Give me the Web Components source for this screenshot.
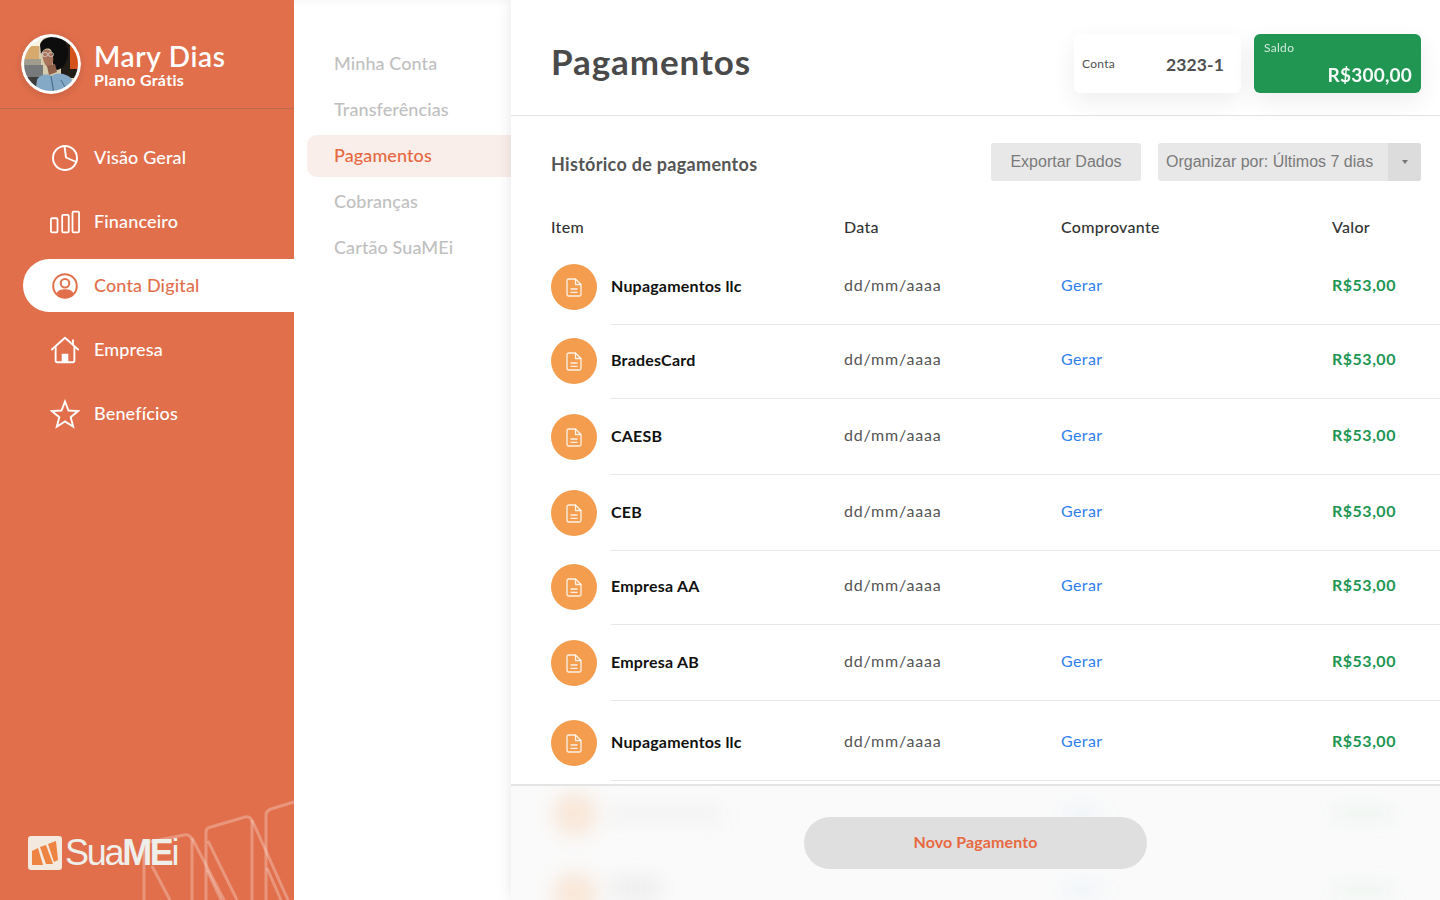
<!DOCTYPE html>
<html lang="pt-BR"><head><meta charset="utf-8"><title>Pagamentos</title>
<style>
html,body{margin:0;height:100%;overflow:hidden;background:#fff}
body{font-family:"Lato","Liberation Sans",sans-serif}
</style></head><body>
<sua-app></sua-app>
<script>
const FONT='"Lato","Liberation Sans",sans-serif';
function def(name,html,proto){
  customElements.define(name,class extends HTMLElement{
    constructor(){super();this.attachShadow({mode:'open'}).innerHTML=typeof html==='function'?html(this):html;}
    connectedCallback(){proto&&proto.call(this)}
  });
}
const ICONS={
 pie:`<svg width="30" height="30" viewBox="0 0 30 30" fill="none" stroke="currentColor" stroke-width="1.9" stroke-linejoin="round"><circle cx="15" cy="15" r="12"/><path d="M14.500 3.200 16 14.500 26.300 19"/></svg>`,
 bars:`<svg width="32" height="24" viewBox="0 0 32 24" fill="none" stroke="currentColor" stroke-width="1.9"><rect x="1" y="8" width="7" height="15" rx="1.2"/><rect x="13" y="4.500" width="7" height="18.500" rx="1.2"/><rect x="24" y="1" width="7" height="22" rx="1.2"/></svg>`,
 user:`<svg width="30" height="30" viewBox="0 0 30 30"><circle cx="15" cy="15" r="11.800" fill="none" stroke="currentColor" stroke-width="2"/><circle cx="15" cy="12.300" r="4.300" fill="none" stroke="currentColor" stroke-width="2"/><path d="M6.500 22.500C8 19.200 11 18.300 15 18.300S22 19.200 23.500 22.500C21.500 25 18.500 26.500 15 26.500S8.500 25 6.500 22.500Z" fill="currentColor"/></svg>`,
 house:`<svg width="32" height="30" viewBox="0 0 32 30" fill="none" stroke="currentColor" stroke-width="2" stroke-linejoin="round" stroke-linecap="round"><path d="M2 14.500 16 2l14 12.500"/><path d="M24.500 9.500V4.500"/><path d="M6 12v14.500a1.500 1.500 0 0 0 1.500 1.500h17a1.500 1.500 0 0 0 1.500-1.500V12"/><rect x="12.500" y="19" width="7" height="9" fill="currentColor" stroke="none"/></svg>`,
 star:`<svg width="30" height="30" viewBox="0 0 30 30" fill="none" stroke="currentColor" stroke-width="1.900" stroke-linejoin="miter"><path d="M15 2.500 18.500 11.500 28.200 12 20.700 18.200 23.200 27.700 15 22.400 6.800 27.700 9.300 18.200 1.800 12 11.500 11.500Z"/></svg>`
};
def('user-avatar',`<style>:host{display:block;width:60px;height:60px;flex:none;border-radius:50%;box-shadow:0 2px 8px rgba(0,0,0,.12)}svg{display:block;border-radius:50%}</style>
<svg width="60" height="60" viewBox="0 0 60 60"><defs><filter id="b" x="-10%" y="-10%" width="120%" height="120%"><feGaussianBlur stdDeviation=".7"/></filter><clipPath id="c"><circle cx="30" cy="30" r="27"/></clipPath></defs>
<circle cx="30" cy="30" r="30" fill="#fff"/>
<g clip-path="url(#c)"><g filter="url(#b)"><rect width="60" height="60" fill="#d6cbac"/><rect x="0" y="0" width="22" height="12" fill="#f7f2e2"/><rect x="3" y="12" width="15" height="13" fill="#d7a96c"/><rect x="2" y="25" width="18" height="6" fill="#a19d8e"/><rect x="0" y="31" width="22" height="12" fill="#77797a"/><rect x="0" y="43" width="20" height="17" fill="#3b3c3e"/><rect x="40" y="2" width="20" height="42" fill="#241c18"/><rect x="49" y="11" width="8" height="24" fill="#d4531f"/>
<path d="M19 11C20 5 28 2 36 3 45 5 48 13 47 22 46 30 41 35 36 36 30 34 33 22 30 16 27 13 22 15 20 20Z" fill="#110e0d"/>
<path d="M22 17C26 14 31 16 32 22 33 28 31 33 27 33 24 32 22 26 21.500 22Z" fill="#a8735a"/>
<rect x="21.500" y="18.500" width="5" height="4" rx="2" fill="none" stroke="#d5d8d6" stroke-width=".8"/><rect x="27.500" y="18.500" width="5" height="4" rx="2" fill="none" stroke="#d5d8d6" stroke-width=".8"/>
<path d="M26 32 34 30 36 38 28 41Z" fill="#8e5f48"/>
<path d="M14 60 16 46C18 41 26 39 30 42 36 38 44 39 50 44L57 60Z" fill="#83a9c6"/><path d="M30 42 33 60" stroke="#4a6b89" stroke-width="1.200" fill="none"/><path d="M40 46 48 60" stroke="#4a6b89" stroke-width="1" fill="none"/>
</g></g></svg>`);
def('nav-item',h=>`<style>:host{display:flex;align-items:center;height:53px;margin-left:23px;border-radius:27px 0 0 27px;color:#fff;font:500 18px/1 ${FONT};letter-spacing:.15px}
:host([active]){background:#fff;color:#E16F4C}
.ic{width:30px;display:flex;justify-content:center;margin-left:27px;margin-right:14px;flex:none}svg{display:block}.t{padding-bottom:2px}</style>
<span class="ic">${ICONS[h.getAttribute('icon')]}</span><span class="t"><slot></slot></span>`);
def('brand-logo',`<style>:host{display:flex;align-items:center;gap:3px;color:#eeeeea}
.t{font:400 36px/1 "Liberation Sans",sans-serif;letter-spacing:-2.300px}b{font-weight:700}svg{display:block}</style>
<svg width="34" height="34" viewBox="0 0 34 34"><rect width="34" height="34" rx="3" fill="#f3e9df"/><path d="M4 15 10 12 15 29H4Z M12 11 18 9 25 28H18Z M20 8 28 5 30 24 26 26Z" fill="#EE8442"/></svg>
<span class="t">Sua<b>ME</b>i</span>`);
def('app-sidebar',`<style>:host{display:flex;flex-direction:column;width:294px;height:900px;flex:none;background:#E16F4C;position:relative;overflow:hidden;color:#fff;font-family:${FONT}}
.prof{height:109px;box-sizing:border-box;padding:34px 0 0 21px;display:flex;gap:13px;border-bottom:1.500px solid #b9694f}
.nm{font:600 28px/1 ${FONT};letter-spacing:.7px;margin-top:8px}.pl{font:700 16px/1 ${FONT};letter-spacing:.3px;margin-top:2px}
nav{display:flex;flex-direction:column;gap:11px;padding-top:22px;flex:1}
.deco{position:absolute;right:0;bottom:0}
brand-logo{position:absolute;left:28px;bottom:29px}</style>
<div class="prof"><user-avatar></user-avatar><div><div class="nm">Mary Dias</div><div class="pl">Plano Grátis</div></div></div>
<nav><slot></slot></nav>
<svg class="deco" width="160" height="100" viewBox="134 800 160 100" fill="none" stroke="#fff" stroke-opacity=".27" stroke-width="3"><path d="M144 900V848Q144 843 149 842L184 835Q190 834 192 840V900"/><path d="M152 866 170 900"/><path d="M192 838 224 900"/><path d="M206 900V832Q206 828 211 827L245 817Q251 816 252 822V900"/><path d="M208 841 237 900"/><path d="M207 870 221 900"/><path d="M252 820 288 900"/><path d="M266 900V815Q266 811 271 809L294 802"/><path d="M267 868 281 900"/></svg>
<brand-logo></brand-logo>`);
def('sub-item',`<style>:host{display:flex;align-items:center;height:42px;box-sizing:border-box;padding-bottom:2px;margin-left:13px;padding-left:27px;border-radius:10px 0 0 10px;color:#c0c0c0;font:500 18px/1 ${FONT};letter-spacing:.1px}
:host([active]){background:#F9EEEA;color:#E6683F}</style><slot></slot>`);
def('sub-nav',`<style>:host{display:flex;flex-direction:column;gap:4px;width:217px;flex:none;box-sizing:border-box;padding-top:43px;background:#fff;box-shadow:inset 0 8px 8px -8px rgba(0,0,0,.06)}</style><slot></slot>`);
def('info-card',`<style>:host{display:block;width:167px;height:59px;box-sizing:border-box;border-radius:6px;background:#fff;box-shadow:0 8px 24px rgba(0,0,0,.07);position:relative;color:#4f4f4f;font-family:${FONT}}
:host([tone=green]){background:#219653;color:#fff}
#w{height:100%;box-sizing:border-box}
.row{display:flex;align-items:center;justify-content:space-between;padding:0 17px 0 8px}
.row .v{padding-top:3px}.l{font:400 12px/1 ${FONT};letter-spacing:.3px}.v{font:700 17.500px/1 ${FONT};letter-spacing:.1px}
.col{padding:8px 9px 0 10px;display:flex;flex-direction:column}.col .l{opacity:.8}.col .v{align-self:flex-end;margin-top:11px;opacity:.95;font-size:19px;letter-spacing:.2px}</style>
<div id="w"></div>`,function(){
 const g=this.getAttribute('tone')==='green';const w=this.shadowRoot.getElementById('w');
 w.className=g?'col':'row';w.innerHTML=`<span class="l">${this.getAttribute('label')}</span><span class="v">${this.getAttribute('value')}</span>`;
});
def('page-header',`<style>:host{display:flex;align-items:flex-start;height:116px;box-sizing:border-box;border-bottom:1px solid #e2e2e2;padding:34px 19px 0 40px;gap:13px;flex:none}
h1{margin:0 auto 0 0;font:700 35px/55px ${FONT};color:#4a4a4a;letter-spacing:.9px}</style>
<h1><slot name="title"></slot></h1><slot></slot>`);
def('tool-bar',`<style>:host{display:flex;align-items:center;height:38px;margin:27px 19px 0 40px;gap:17px;flex:none}
h2{margin:0 auto 0 0;font:700 18px/1 ${FONT};color:#555;letter-spacing:.3px;padding-top:3px}
.b{height:38px;display:flex;align-items:center;box-sizing:border-box;background:#e8e8e8;border-radius:3px;color:#7a7a7a;font:400 16px/1 "Liberation Sans",sans-serif}
.b span:first-child,.e{padding-bottom:1px}
.e{width:150px;justify-content:center}.s{width:263px;padding-left:8px;justify-content:space-between;overflow:hidden;padding-bottom:0}
.a{width:33px;height:100%;background:#dcdcdc;display:flex;align-items:center;justify-content:center}
.a i{border:3.500px solid transparent;border-top:4px solid #777;border-bottom:0;display:block}</style>
<h2>Histórico de pagamentos</h2><div class="b e">Exportar Dados</div><div class="b s"><span>Organizar por: Últimos 7 dias</span><span class="a"><i></i></span></div>`);
const COLS='grid-template-columns:293px 217px 271px 1fr;';
def('table-head',`<style>:host{display:grid;${COLS}height:32px;margin:38px 0 0 40px;align-items:start;font:500 16px/1 ${FONT};color:#333;letter-spacing:.3px;flex:none}</style><span>Item</span><span>Data</span><span>Comprovante</span><span>Valor</span>`);
def('pay-row',h=>`<style>:host{display:grid;${COLS}align-items:center;flex:none;margin-left:40px;height:var(--h,76px);box-sizing:border-box;padding-top:var(--p,0);padding-bottom:var(--q,0);position:relative;font:400 16px/1 ${FONT};letter-spacing:.8px}
:host::after{content:"";position:absolute;left:60px;right:0;bottom:0;height:1px;background:#e6e6e6}
.n{display:flex;align-items:center;gap:14px;font-weight:700;color:#111;letter-spacing:.2px}.n>span:last-child{margin-top:-2px}
.c{width:46px;height:46px;border-radius:50%;background:#F49D4E;display:flex;align-items:center;justify-content:center;flex:none}
.d{color:#555;margin-top:-4px}.g{color:#2F80ED;margin-top:-4px;letter-spacing:.4px}.v{color:#219653;font-weight:700;margin-top:-4px;letter-spacing:.5px}svg{display:block}</style>
<div class="n"><span class="c"><svg width="16" height="19" viewBox="0 0 16 19" fill="none" stroke="#fff" stroke-opacity=".85" stroke-width="1.300" stroke-linejoin="round"><path d="M2.500 1h7L15 6.500V16.500a1.500 1.500 0 0 1-1.500 1.500h-11A1.500 1.500 0 0 1 1 16.500V2.500A1.500 1.500 0 0 1 2.500 1Z"/><path d="M9.500 1v5.500H15"/><path d="M4.500 11h7M4.500 14.300h7"/></svg></span><span><slot></slot></span></div>
<span class="d">dd/mm/aaaa</span><span class="g">Gerar</span><span class="v">R$53,00</span>`);
def('action-bar',`<style>:host{position:absolute;left:0;right:0;bottom:0;height:116px;box-sizing:border-box;border-top:2px solid #e4e4e4;background:#fafafa;overflow:hidden;display:flex;justify-content:center;padding-top:31px}
.blur{position:absolute;inset:0;filter:blur(10px)}
.blur i{position:absolute;display:block}
.o{left:42px;width:44px;height:44px;border-radius:50%;background:#f49d4e;opacity:.2}
.g{left:100px;height:20px;background:#888;opacity:.06}
.bl{left:550px;width:42px;height:16px;background:#2F80ED;opacity:.05}
.gr{left:820px;width:64px;height:16px;background:#219653;opacity:.05}
button{all:unset;position:relative;width:343px;height:52px;box-sizing:border-box;padding-bottom:2px;border-radius:26px;background:#dfdfdf;color:#E8693F;font:700 16px/50px ${FONT};text-align:center;letter-spacing:.1px}</style>
<div class="blur"><i class="o" style="top:6px"></i><i class="g" style="top:18px;width:110px"></i><i class="bl" style="top:20px"></i><i class="gr" style="top:20px"></i><i class="o" style="top:86px"></i><i class="g" style="top:92px;width:50px;opacity:.12"></i><i class="bl" style="top:96px"></i><i class="gr" style="top:96px"></i></div>
<button>Novo Pagamento</button>`);
def('main-panel',`<style>:host{display:flex;flex-direction:column;flex:1;min-width:0;height:900px;overflow:hidden;position:relative;background:#fff;box-shadow:0 0 14px rgba(0,0,0,.1);z-index:1}</style><slot></slot>`);
def('sua-app',`<style>:host{display:flex;width:1440px;height:900px;overflow:hidden}</style>
<app-sidebar>
 <nav-item icon="pie">Visão Geral</nav-item><nav-item icon="bars">Financeiro</nav-item><nav-item icon="user" active>Conta Digital</nav-item><nav-item icon="house">Empresa</nav-item><nav-item icon="star">Benefícios</nav-item>
</app-sidebar>
<sub-nav><sub-item>Minha Conta</sub-item><sub-item>Transferências</sub-item><sub-item active>Pagamentos</sub-item><sub-item>Cobranças</sub-item><sub-item>Cartão SuaMEi</sub-item></sub-nav>
<main-panel>
 <page-header><span slot="title">Pagamentos</span><info-card label="Conta" value="2323-1"></info-card><info-card tone="green" label="Saldo" value="R$300,00"></info-card></page-header>
 <tool-bar></tool-bar>
 <table-head></table-head>
 <pay-row style="--h:74px;--q:2px">Nupagamentos llc</pay-row>
 <pay-row style="--h:74px;--q:2px">BradesCard</pay-row>
 <pay-row>CAESB</pay-row>
 <pay-row>CEB</pay-row>
 <pay-row style="--h:74px;--q:2px">Empresa AA</pay-row>
 <pay-row>Empresa AB</pay-row>
 <pay-row style="--h:80px;--p:4px">Nupagamentos llc</pay-row>
 <action-bar></action-bar>
</main-panel>`);
</script></body></html>
